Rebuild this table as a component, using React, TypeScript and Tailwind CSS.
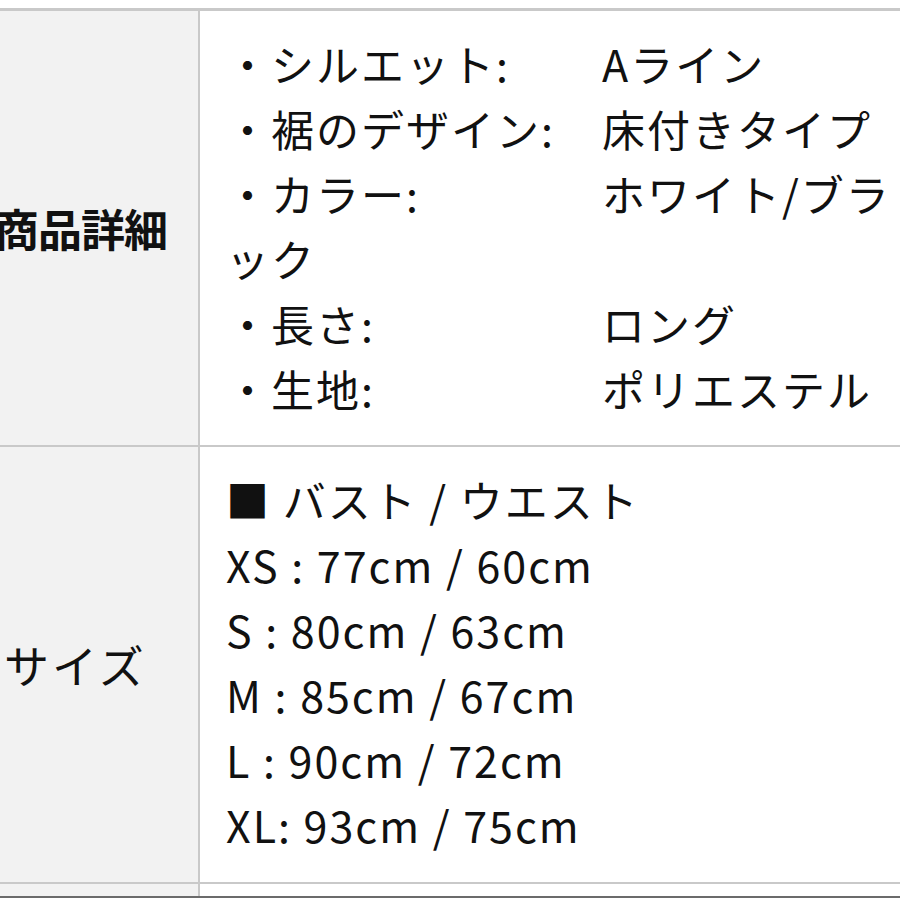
import React from "react";

const details = [
  ["・シルエット:", "Aライン"],
  ["・裾のデザイン:", "床付きタイプ"],
  ["・カラー:", "ホワイト/ブラック"],
  ["・長さ:", "ロング"],
  ["・生地:", "ポリエステル"],
];

const sizes = [
  "XS : 77cm / 60cm",
  "S : 80cm / 63cm",
  "M : 85cm / 67cm",
  "L : 90cm / 72cm",
  "XL: 93cm / 75cm",
];

const font = { fontFamily: '"Noto Sans CJK JP", "Noto Sans", sans-serif' };

const App = () => {
  return (
    <div
      className="w-[900px] h-[900px] overflow-hidden bg-white pt-[8px] text-[#111]"
      style={font}
    >
      <div className="border-t-[3px] border-[#c9c9c9]">
        {/* 商品詳細 */}
        <div className="flex border-b-2 border-[#c9c9c9]">
          <div className="w-[200px] shrink-0 bg-[#f2f2f2] border-r-2 border-[#c9c9c9] flex items-center overflow-hidden">
            <span className="ml-[-5px] text-[44px] font-bold leading-none tracking-[-1px]">
              商品詳細
            </span>
          </div>
          <div className="flex-1 pt-[20px] pb-[24px] pl-[26px] text-[43px] leading-[65px] tracking-[2px]">
            {details.map(([label, value]) => (
              <div key={label}>
                <span className="inline-block w-[376px]">{label}</span>
                {value}
              </div>
            ))}
          </div>
        </div>

        {/* サイズ */}
        <div className="flex border-b-2 border-[#c9c9c9]">
          <div className="w-[200px] shrink-0 bg-[#f2f2f2] border-r-2 border-[#c9c9c9] flex items-center pl-[4px]">
            <span className="text-[45px] leading-none tracking-[3px]">サイズ</span>
          </div>
          <div className="flex-1 pt-[20px] pb-[25px] pl-[26px] text-[43px] leading-[65px] tracking-[2px]">
            <div>■ バスト / ウエスト</div>
            {sizes.map((s) => (
              <div key={s}>{s}</div>
            ))}
          </div>
        </div>

        <div className="flex h-[12px]">
          <div className="w-[200px] shrink-0 bg-[#f2f2f2] border-r-2 border-[#c9c9c9]" />
          <div className="flex-1" />
        </div>
        <div className="h-[2px] bg-[#6b6b6b]" />
      </div>
    </div>
  );
};

export default App;
